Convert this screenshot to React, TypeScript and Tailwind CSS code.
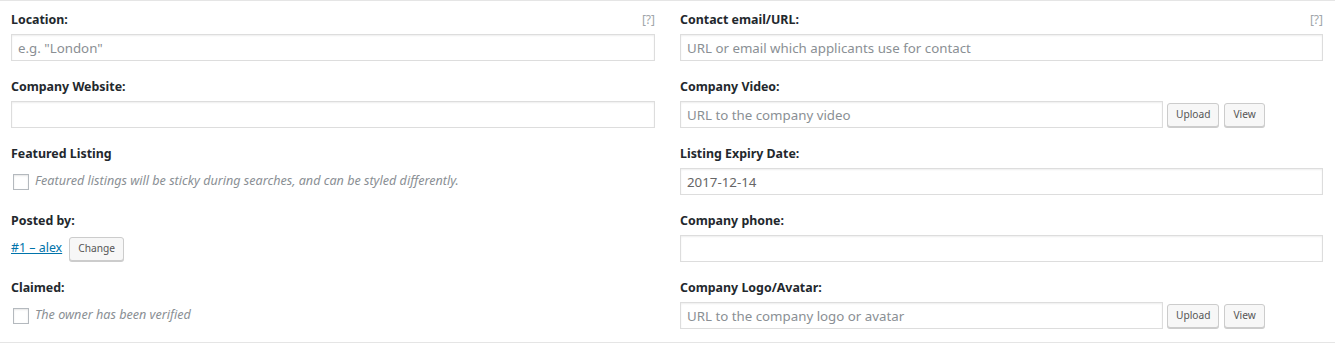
import { ReactNode } from "react";

const font = { fontFamily: '"Segoe UI", "Noto Sans", sans-serif' };

function Label({ children, help }: { children: ReactNode; help?: boolean }) {
  return (
    <div className="h-[24px] flex items-center justify-between">
      <span className="text-[12.4px] font-bold text-[#23282d]">{children}</span>
      {help && <span className="text-[12px] text-[#a0a5aa]">[?]</span>}
    </div>
  );
}

function TextInput({ placeholder, value }: { placeholder?: string; value?: string }) {
  return (
    <input
      type="text"
      defaultValue={value}
      placeholder={placeholder}
      className="h-[27px] w-full border border-[#ddd] bg-white px-[6px] text-[13.3px] text-[#666] placeholder:text-[#8a8f94] shadow-[inset_0_1px_2px_rgba(0,0,0,0.07)] outline-none"
      style={font}
    />
  );
}

function Button({ children }: { children: ReactNode }) {
  return (
    <button
      type="button"
      className="h-[24px] px-[8px] rounded-[3px] border border-[#ccc] bg-[#f7f7f7] text-[10.2px] text-[#555] shadow-[0_1px_0_#ccc]"
      style={font}
    >
      {children}
    </button>
  );
}

function Checkbox({ text }: { text: string }) {
  return (
    <div className="h-[27px] flex items-center gap-[6px] pl-[2px]">
      <span className="w-[16px] h-[16px] border border-[#b4b9be] bg-white shadow-[inset_0_1px_2px_rgba(0,0,0,0.1)]" />
      <span className="text-[12.6px] italic text-[#8a8f94]">{text}</span>
    </div>
  );
}

function UploadField({ placeholder }: { placeholder: string }) {
  return (
    <div className="flex items-center gap-[4px]">
      <div className="w-[483px]">
        <TextInput placeholder={placeholder} />
      </div>
      <div className="flex items-center gap-[5px]">
        <Button>Upload</Button>
        <Button>View</Button>
      </div>
    </div>
  );
}

export default function App() {
  return (
    <div className="bg-white w-[1335px] h-[343px]" style={font}>
      <div className="border-y border-[#e5e5e5] pt-[7px] pb-[13px] pl-[11px] pr-[12px] grid grid-cols-[644px_643px] gap-x-[25px]">
        <div className="flex flex-col gap-[14px]">
          <div>
            <Label help>Location:</Label>
            <div className="mt-[2px]"><TextInput placeholder={'e.g. "London"'} /></div>
          </div>
          <div>
            <Label>Company Website:</Label>
            <div className="mt-[2px]"><TextInput /></div>
          </div>
          <div>
            <Label>Featured Listing</Label>
            <div className="mt-[2px]">
              <Checkbox text="Featured listings will be sticky during searches, and can be styled differently." />
            </div>
          </div>
          <div>
            <Label>Posted by:</Label>
            <div className="mt-[2px] h-[27px] flex items-center gap-[7px]">
              <a href="#" className="text-[12.4px] text-[#0073aa] underline">#1 – alex</a>
              <Button>Change</Button>
            </div>
          </div>
          <div>
            <Label>Claimed:</Label>
            <div className="mt-[2px]">
              <Checkbox text="The owner has been verified" />
            </div>
          </div>
        </div>

        <div className="flex flex-col gap-[14px]">
          <div>
            <Label help>Contact email/URL:</Label>
            <div className="mt-[2px]"><TextInput placeholder="URL or email which applicants use for contact" /></div>
          </div>
          <div>
            <Label>Company Video:</Label>
            <div className="mt-[2px]"><UploadField placeholder="URL to the company video" /></div>
          </div>
          <div>
            <Label>Listing Expiry Date:</Label>
            <div className="mt-[2px]"><TextInput value="2017-12-14" /></div>
          </div>
          <div>
            <Label>Company phone:</Label>
            <div className="mt-[2px]"><TextInput /></div>
          </div>
          <div>
            <Label>Company Logo/Avatar:</Label>
            <div className="mt-[2px]"><UploadField placeholder="URL to the company logo or avatar" /></div>
          </div>
        </div>
      </div>
    </div>
  );
}
